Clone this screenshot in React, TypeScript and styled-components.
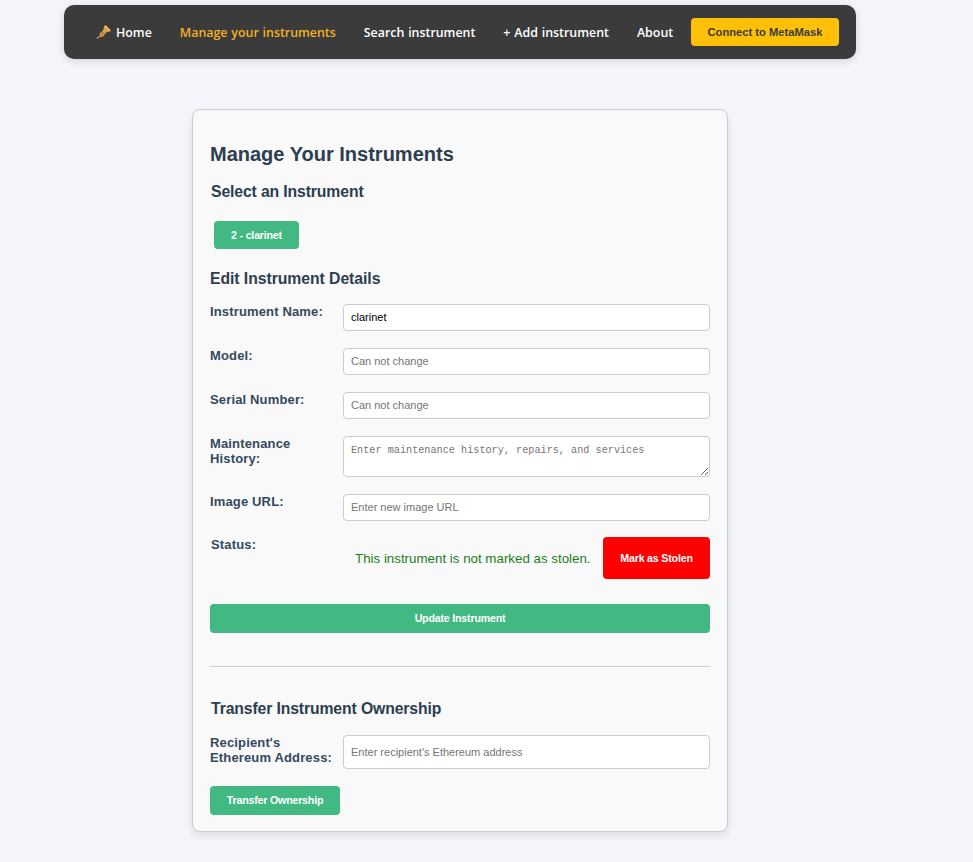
import { createGlobalStyle } from "styled-components";
import styled from "styled-components";

const GlobalStyle = createGlobalStyle`
  html, body {
    margin: 0;
    padding: 0;
    background: #f4f6fb;
    font-family: "Liberation Sans", Arial, sans-serif;
  }
  * {
    box-sizing: border-box;
  }
`;

const navLinks = [
  { label: "Manage your instruments", active: true },
  { label: "Search instrument" },
  { label: "+ Add instrument" },
  { label: "About" },
];

function TrumpetIcon() {
  return (
    <svg width="15" height="15" viewBox="0 0 15 15">
      <path d="M0.5 13.8 L1 12.6 L4 10.5 L3.5 8.5 L7 5.5 L8.2 1 L10 0.6 L14.5 5.2 L14 6.6 L10 7.6 L8 11 L5.5 12 L3.5 12 L1.2 14 Z" fill="#d9a048" />
      <path d="M8.2 1 L10 0.6 L14.5 5.2 L14 6.6 L11 4 Z" fill="#f2bd5c" />
      <path d="M4.2 8.6 L7.2 11.6 M5.8 7 L8.8 10" stroke="#85601f" strokeWidth="1" />
    </svg>
  );
}

export default function App() {
  return (
    <Page>
      <GlobalStyle />
      <Nav>
        <NavLinks>
          <NavLink $separated>
            <TrumpetIcon />
            Home
          </NavLink>
          {navLinks.map((link) => (
            <NavLink key={link.label} $active={link.active} $separated={link.label !== "About"}>
              {link.label}
            </NavLink>
          ))}
        </NavLinks>
        <ConnectButton>Connect to MetaMask</ConnectButton>
      </Nav>

      <Card>
        <Title>Manage Your Instruments</Title>
        <SubTitle>Select an Instrument</SubTitle>
        <PickButton>2 - clarinet</PickButton>
        <SectionTitle>Edit Instrument Details</SectionTitle>

        <FormRow>
          <Label>Instrument Name:</Label>
          <Input defaultValue="clarinet" />
        </FormRow>
        <FormRow>
          <Label>Model:</Label>
          <Input placeholder="Can not change" />
        </FormRow>
        <FormRow>
          <Label>Serial Number:</Label>
          <Input placeholder="Can not change" />
        </FormRow>
        <FormRow>
          <Label>
            Maintenance
            <br />
            History:
          </Label>
          <TextArea placeholder="Enter maintenance history, repairs, and services" />
        </FormRow>
        <ImageRow>
          <Label>Image URL:</Label>
          <Input placeholder="Enter new image URL" />
        </ImageRow>
        <StatusRow>
          <StatusLabel>Status:</StatusLabel>
          <StatusText>This instrument is not marked as stolen.</StatusText>
          <StolenButton>Mark as Stolen</StolenButton>
        </StatusRow>

        <UpdateButton>Update Instrument</UpdateButton>
        <Divider />

        <TransferTitle>Transfer Instrument Ownership</TransferTitle>
        <TransferRow>
          <Label>
            Recipient's
            <br />
            Ethereum Address:
          </Label>
          <TallInput placeholder="Enter recipient's Ethereum address" />
        </TransferRow>
        <TransferButton>Transfer Ownership</TransferButton>
      </Card>
    </Page>
  );
}

const Page = styled.div`
  min-height: 862px;
  padding: 5px 0 30px 64px;
`;

const Nav = styled.nav`
  width: 792px;
  height: 54px;
  display: flex;
  align-items: center;
  justify-content: space-between;
  padding: 0 17px 0 32px;
  background: #3b3b3b;
  border-radius: 10px;
  box-shadow: 0 2px 8px rgba(0, 0, 0, 0.15);
`;

const NavLinks = styled.div`
  display: flex;
  align-items: center;
  gap: 28px;
`;

const NavLink = styled.a<{ $active?: boolean; $separated?: boolean }>`
  position: relative;
  display: flex;
  align-items: center;
  gap: 5px;
  font-family: "Open Sans", "Noto Sans", sans-serif;
  font-size: 12.4px;
  font-weight: 600;
  word-spacing: 0.6px;
  color: ${({ $active }) => ($active ? "#f5b01f" : "#ffffff")};
  white-space: nowrap;

  ${({ $separated }) =>
    $separated
      ? `&::after {
          content: "";
          position: absolute;
          top: -2px;
          bottom: -2px;
          right: -14px;
          width: 1px;
          background: #383c40;
        }`
      : ""}
`;

const ConnectButton = styled.button`
  flex: none;
  width: 148px;
  height: 28px;
  border: none;
  border-radius: 4px;
  background: #ffc107;
  color: #3b3b3b;
  font-family: "Liberation Sans", Arial, sans-serif;
  font-size: 11.2px;
  font-weight: 700;
`;

const Card = styled.main`
  width: 536px;
  height: 723px;
  margin: 50px 0 0 128px;
  padding: 0 17px;
  background: #f9f9f9;
  border: 1px solid #cccccc;
  border-radius: 8px;
  box-shadow: 0 4px 8px rgba(0, 0, 0, 0.1);
  color: #2c3e50;
`;

const Title = styled.h1`
  margin: 33px 0 0;
  font-size: 20px;
  line-height: 23px;
  font-weight: 700;
`;

const SubTitle = styled.h2`
  margin: 17px 0 0 1px;
  font-size: 15.75px;
  line-height: 18px;
  font-weight: 700;
  letter-spacing: -0.12px;
`;

const SectionTitle = styled.h2`
  margin: 21px 0 16px;
  font-size: 15.75px;
  line-height: 18px;
  font-weight: 700;
  letter-spacing: -0.05px;
`;

const GreenButton = styled.button`
  display: block;
  border: none;
  border-radius: 4px;
  background: #42b883;
  color: #ffffff;
  font-family: "Liberation Sans", Arial, sans-serif;
  font-size: 10.67px;
  font-weight: 700;
  letter-spacing: -0.2px;
`;

const PickButton = styled(GreenButton)`
  width: 85px;
  height: 28px;
  margin: 20px 0 0 4px;
`;

const FormRow = styled.div`
  display: flex;
  align-items: flex-start;
  margin-bottom: 17px;
`;

const ImageRow = styled(FormRow)`
  margin-bottom: 16px;
`;

const Label = styled.label`
  width: 133px;
  flex: none;
  font-size: 13px;
  line-height: 15px;
  font-weight: 700;
  letter-spacing: 0.15px;
  color: #34495e;
`;

const Input = styled.input`
  flex: 1;
  min-width: 0;
  height: 27px;
  padding: 0 7px 2px;
  background: #ffffff;
  border: 1px solid #cccccc;
  border-radius: 4px;
  color: #000000;
  font-family: "Liberation Sans", Arial, sans-serif;
  font-size: 11px;
  &::placeholder {
    color: #757575;
  }
`;

const TallInput = styled(Input)`
  height: 34px;
  padding-bottom: 0;
`;

const TextArea = styled.textarea`
  flex: 1;
  min-width: 0;
  height: 41px;
  padding: 7px;
  background: #ffffff;
  border: 1px solid #cccccc;
  border-radius: 4px;
  font-family: "Liberation Mono", monospace;
  font-size: 10.2px;
  line-height: 13px;
  &::placeholder {
    color: #757575;
  }
`;

const StatusRow = styled.div`
  display: flex;
  align-items: center;
  height: 42px;
`;

const StatusLabel = styled(Label)`
  align-self: flex-start;
  width: 145px;
  padding-left: 1px;
`;

const StatusText = styled.span`
  flex: 1;
  color: #1e7d1e;
  font-size: 13.33px;
`;

const StolenButton = styled.button`
  width: 107px;
  height: 42px;
  border: none;
  border-radius: 4px;
  background: #ff0000;
  color: #ffffff;
  font-family: "Liberation Sans", Arial, sans-serif;
  font-size: 10.67px;
  font-weight: 700;
  letter-spacing: -0.2px;
`;

const UpdateButton = styled(GreenButton)`
  width: 100%;
  height: 29px;
  margin-top: 25px;
  padding: 0 0 2px;
`;

const Divider = styled.hr`
  height: 1px;
  margin: 33px 0 0;
  border: none;
  background: #cccccc;
`;

const TransferTitle = styled(SubTitle)`
  margin-top: 33px;
  margin-bottom: 17px;
`;

const TransferRow = styled(FormRow)`
  align-items: flex-start;
`;

const TransferButton = styled(GreenButton)`
  width: 130px;
  height: 29px;
  padding: 0 0 2px;
`;
